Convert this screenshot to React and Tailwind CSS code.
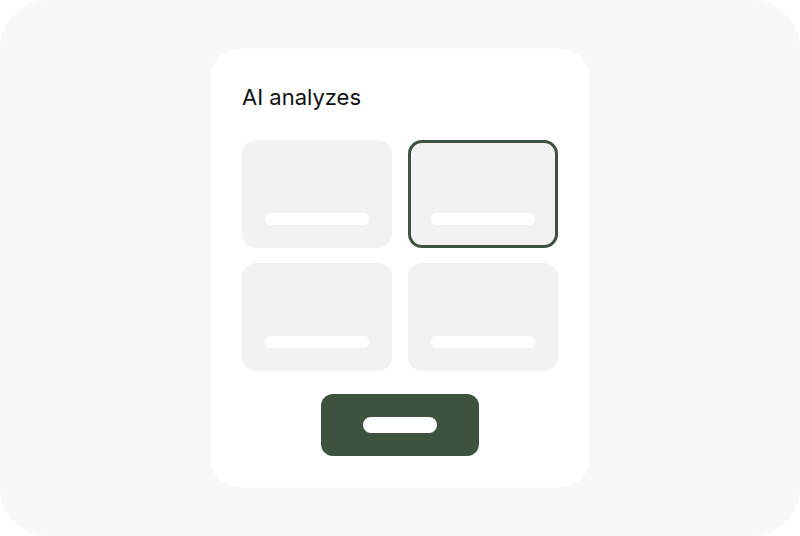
function Tile({ selected }) {
  return (
    <div
      className={
        selected
          ? 'flex h-[108px] items-end justify-center rounded-[14px] border-[3px] border-[#3d5240] bg-[#f2f2f2] pb-[20px]'
          : 'flex h-[108px] items-end justify-center rounded-[14px] bg-[#f2f2f2] pb-[23px]'
      }
    >
      <div className="h-3 w-[104px] rounded-full bg-white" />
    </div>
  )
}

export default function App() {
  return (
    <div className="h-[536px] w-[800px] bg-white">
      <div className="flex h-full w-full items-center justify-center rounded-[48px] bg-[#f7f7f7]">
        <div className="relative flex h-[438px] w-[378px] flex-col rounded-[28px] bg-white px-[31px] pt-[84px] pb-[31px]">
          <h1 className="absolute left-[31px] top-[34px] text-[22px] leading-[28px] text-[#111] [font-family:Inter,'Noto_Sans',sans-serif]">
            AI analyzes
          </h1>
          <div className="mt-[7px] grid grid-cols-2 gap-x-4 gap-y-[15px]">
            <Tile />
            <Tile selected />
            <Tile />
            <Tile />
          </div>
          <div className="mt-[23px] flex justify-center">
            <button className="flex h-[62px] w-[158px] items-center justify-center rounded-xl bg-[#3e5240]">
              <span className="h-4 w-[74px] rounded-full bg-white" />
            </button>
          </div>
        </div>
      </div>
    </div>
  )
}
